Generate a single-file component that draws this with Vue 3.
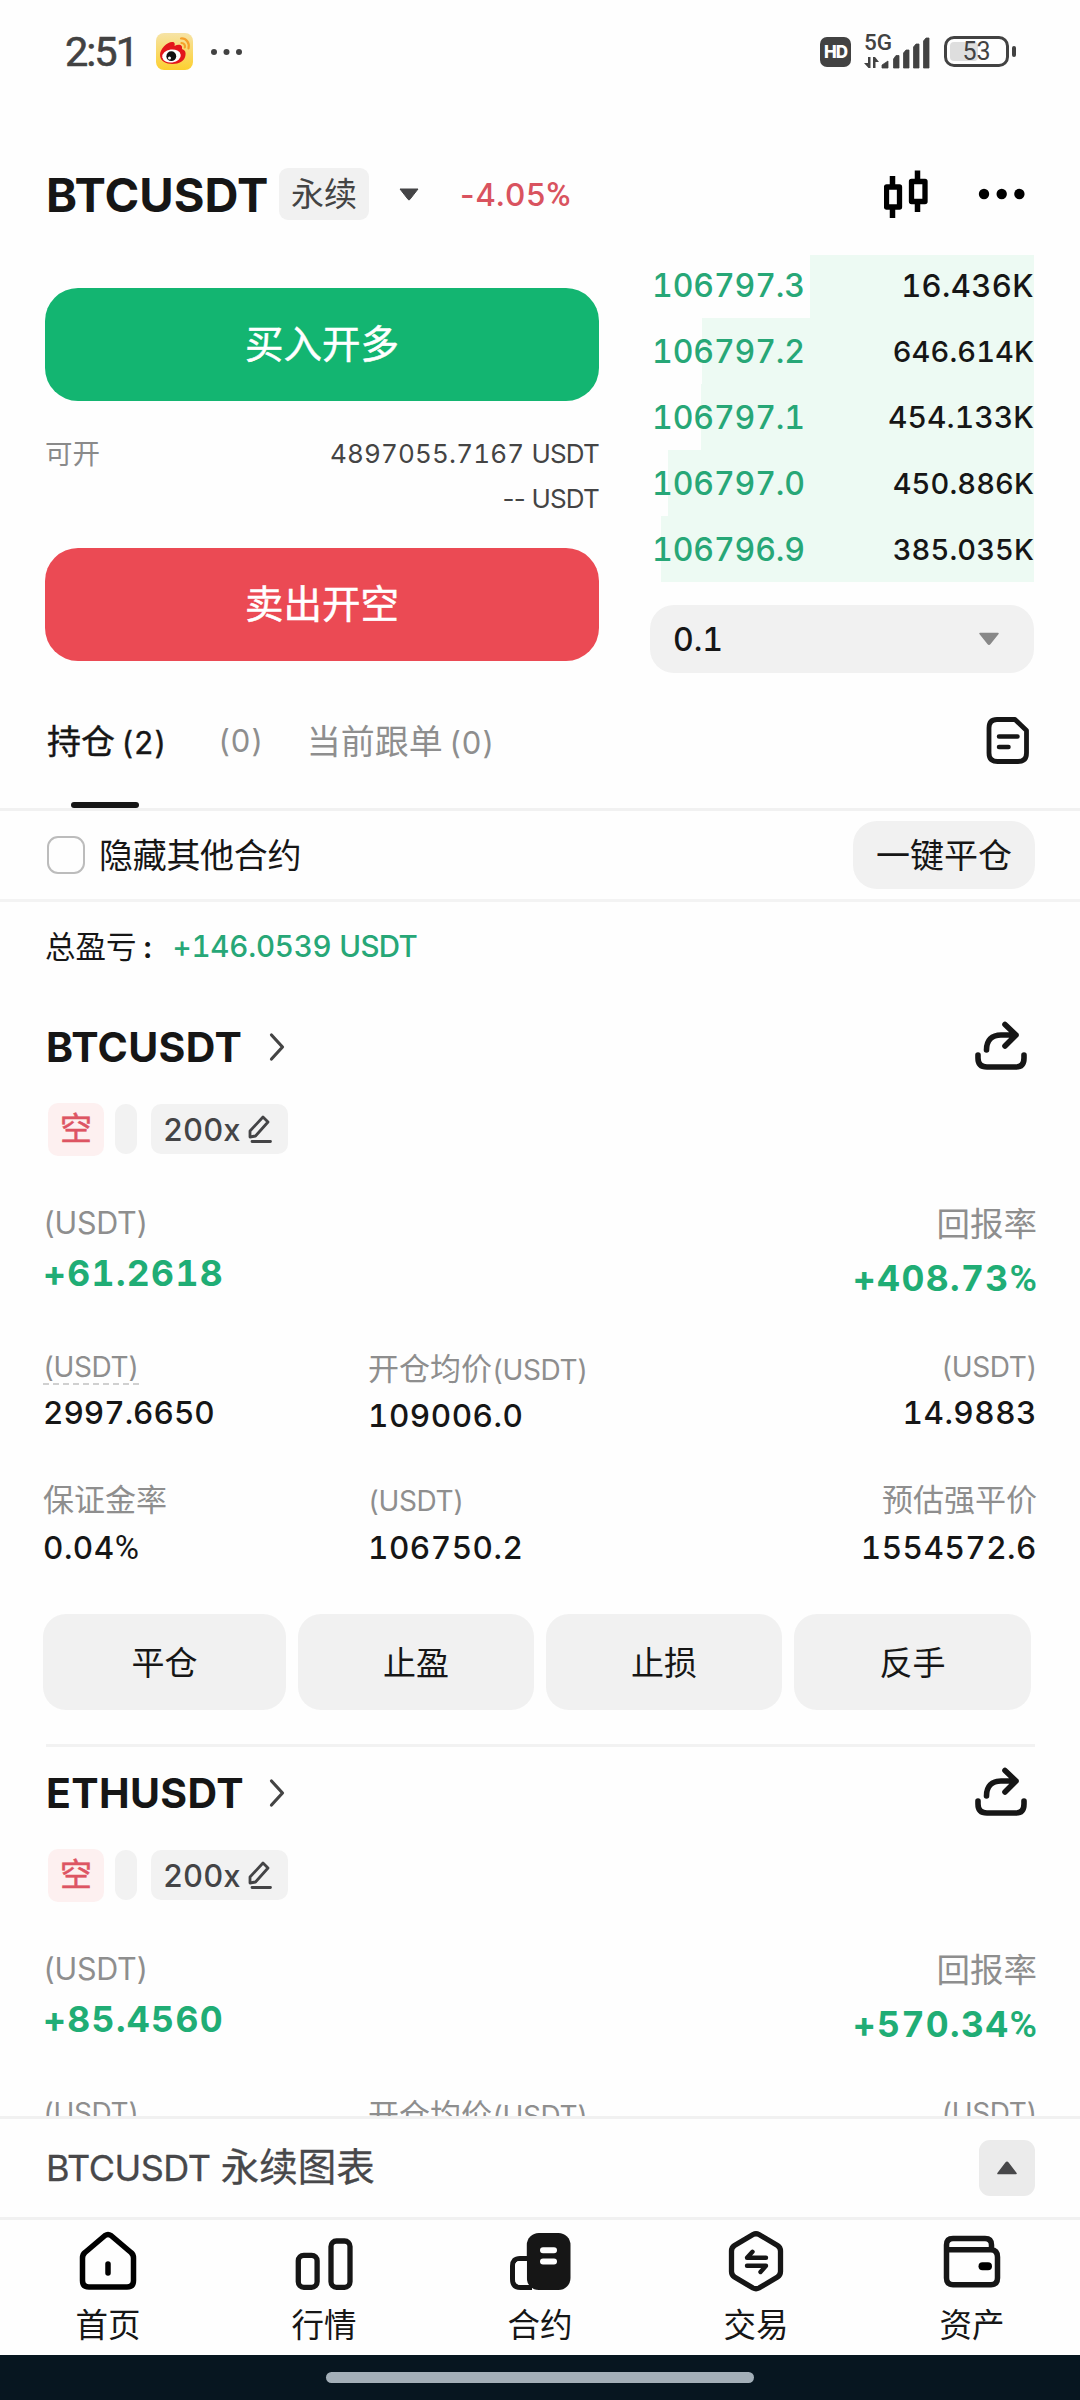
<script setup>
const bids = [
  { price: '106797.3', amount: '16.436K', width: 224, fit: 'wide' },
  { price: '106797.2', amount: '646.614K', width: 332 },
  { price: '106797.1', amount: '454.133K', width: 333, fit: 'mid' },
  { price: '106797.0', amount: '450.886K', width: 366 },
  { price: '106796.9', amount: '385.035K', width: 373 },
]
const positions = [
  {
    symbol: 'BTCUSDT', pnl: '+61.2618', roi: '+408.73',
    detail: {
      size: '2997.6650', entry: '109006.0', margin: '14.9883',
      ratio: '0.04', mark: '106750.2', liq: '1554572.6',
    },
  },
  { symbol: 'ETHUSDT', pnl: '+85.4560', roi: '+570.34' },
]
const actions = ['平仓', '止盈', '止损', '反手']
</script>

<template>
  <div class="screen">
    <header class="status">
      <span class="clock">2:51</span>
      <svg class="weibo" width="37" height="37" viewBox="0 0 37 37">
        <defs>
          <linearGradient id="wb" x1="0" y1="0" x2="0" y2="1">
            <stop offset="0" stop-color="#f6e3a6" />
            <stop offset="1" stop-color="#fdd02f" />
          </linearGradient>
        </defs>
        <rect width="37" height="37" rx="8" fill="url(#wb)" />
        <path d="M4 22C4 16 11 9 16 9C19 9 19 11 18.500 13C22 11 27 11 26 16C29 17 30 19 29.500 22C29 28 23 31 16.500 31C10 31 4 28 4 22Z" fill="#e3161b" />
        <ellipse cx="15.500" cy="23" rx="9.300" ry="6.500" fill="#fff" transform="rotate(-8 15.500 23)" />
        <circle cx="15.300" cy="23.200" r="4.900" fill="#111" />
        <circle cx="13.500" cy="25" r="1.500" fill="#fff" />
        <path d="M25 5.500C30 5 34 10 32.500 15.500M25.500 10C28 10 29.500 12 28.800 14.500" fill="none" stroke="#f6a02a" stroke-width="2.200" stroke-linecap="round" />
      </svg>
      <svg class="more" width="32" height="8" viewBox="0 0 32 8">
        <g fill="#424242"><circle cx="4" cy="4" r="3" /><circle cx="16.500" cy="4" r="3" /><circle cx="29" cy="4" r="3" /></g>
      </svg>
      <div class="sys">
        <span class="hd">HD</span>
        <div class="net">
          <span class="gen">5G</span>
          <svg width="66" height="34" viewBox="0 0 66 34">
            <g fill="#424242">
              <path d="M18 33V30L24 26V33ZM29.500 33V24L32 20.500H35V33ZM39.500 33V18L42 15H45V33ZM49.500 33V12L52 9H55V33ZM59.500 33V6L62 3H65V33Z" stroke="#424242" stroke-width=".8" stroke-linejoin="round" />
              <path d="M4 22H6.500V33H4.500L0 28H4ZM9 33V22H11L15 27H11.500V33Z" />
            </g>
          </svg>
        </div>
        <div class="battery"><span class="fill"></span><span class="pct">53</span><i></i></div>
      </div>
    </header>

    <section class="head">
      <span class="symbol">BTCUSDT</span>
      <span class="kind">永续</span>
      <svg class="caret" width="20" height="13" viewBox="0 0 20 13"><path d="M1 1H19L10.800 11.500Q10 12.500 9.200 11.500Z" fill="#444446" stroke="#444446" stroke-linejoin="round" /></svg>
      <span class="change">-4.05<i class="pc">%</i></span>
      <svg class="candles" width="44" height="49" viewBox="0 0 44 49">
        <path d="M8.500 6V15M8.500 39V48M33.500 .5V10M33.500 33V42" stroke="#000" stroke-width="5.500" />
        <path d="M2.500 17H15.500V37H2.500ZM27.500 11.500H41V31.500H27.500Z" fill="none" stroke="#000" stroke-width="5.300" stroke-linejoin="round" />
      </svg>
      <svg class="dots" width="48" height="12" viewBox="0 0 48 12"><circle cx="6" cy="6" r="5.200" /><circle cx="23.700" cy="6" r="5.200" /><circle cx="41.400" cy="6" r="5.200" /></svg>
    </section>

    <section class="trade">
      <div class="order">
        <button class="buy">买入开多</button>
        <div class="avail">
          <span class="lab">可开</span>
          <div class="vals"><p>4897055.7167 <em>USDT</em></p><p><em>-- USDT</em></p></div>
        </div>
        <button class="sell">卖出开空</button>
      </div>
      <div class="book">
        <div v-for="(b, i) in bids" :key="b.price" class="bid" :class="{ first: i === 0 }">
          <i class="depth" :style="{ width: b.width + 'px' }"></i>
          <span class="price">{{ b.price }}</span><span class="amt" :class="b.fit">{{ b.amount }}</span>
        </div>
        <div class="step">
          <span>0.1</span>
          <svg width="22" height="14" viewBox="0 0 22 14"><path d="M2 1.500H20L12 11.500Q11 12.800 10 11.500Z" fill="#888" stroke="#888" stroke-width="1.500" stroke-linejoin="round" /></svg>
        </div>
      </div>
    </section>

    <nav class="tabs">
      <span class="tab on">持仓 <em>(2)</em></span>
      <span class="tab t2"><em>(0)</em></span>
      <span class="tab t3">当前跟单 <em>(0)</em></span>
      <svg class="doc" width="44" height="50" viewBox="0 0 44 50">
        <path d="M11 3.500H29L40.500 14.500V37Q40.500 45.500 32 45.500H11.500Q3 45.500 3 37V12Q3 3.500 11 3.500Z" fill="none" stroke="#161616" stroke-width="4.800" stroke-linejoin="round" />
        <path d="M13 20.500H31.500M13 31H22.500" stroke="#161616" stroke-width="4.500" stroke-linecap="round" />
      </svg>
    </nav>

    <section class="filter">
      <i class="check"></i><span class="hide">隐藏其他合约</span>
      <button class="close-all">一键平仓</button>
    </section>

    <div class="list">
      <div class="total"><span class="cn">总盈亏</span><span class="colon">:</span><b>+146.0539 <em>USDT</em></b></div>
      <article v-for="p in positions" :key="p.symbol" class="pos">
        <div class="title">
          <h2>{{ p.symbol }}</h2>
          <svg class="chev" width="16" height="30" viewBox="0 0 16 30"><path d="M2.500 3L13.500 15L2.500 27" fill="none" stroke="#444" stroke-width="3.200" stroke-linecap="round" stroke-linejoin="round" /></svg>
          <svg class="share" width="54" height="52" viewBox="0 0 54 52">
            <path d="M4 35V38Q4 47 13 47H42Q50 47 50 38V35M12.500 30C12.500 20 18 15 27 15H42M31 4.500L42 15L31 26" fill="none" stroke="#161616" stroke-width="5.600" stroke-linecap="round" stroke-linejoin="round" />
          </svg>
        </div>
        <div class="tags">
          <span class="side">空</span><span class="mode"></span>
          <span class="lev">200x
            <svg width="24" height="30" viewBox="0 0 24 30"><path d="M2 23V17L15 3L20 8L7.500 22ZM4 27.500H22.500" fill="none" stroke="#444446" stroke-width="2.800" stroke-linejoin="round" stroke-linecap="round" /></svg>
          </span>
        </div>
        <div class="summary">
          <div><p class="k">(USDT)</p><p class="v">{{ p.pnl }}</p></div>
          <div class="r"><p class="k cn">回报率</p><p class="v">{{ p.roi }}<i class="pc">%</i></p></div>
        </div>
        <div class="grid">
          <div><p class="k"><span class="under">(USDT)</span></p><p v-if="p.detail" class="v size">{{ p.detail.size }}</p></div>
          <div class="low"><p class="k"><span class="cn">开仓均价</span>(USDT)</p><p v-if="p.detail" class="v">{{ p.detail.entry }}</p></div>
          <div class="r"><p class="k">(USDT)</p><p v-if="p.detail" class="v">{{ p.detail.margin }}</p></div>
        </div>
        <template v-if="p.detail">
          <div class="grid second">
            <div><p class="k cn">保证金率</p><p class="v">{{ p.detail.ratio }}<i class="pc">%</i></p></div>
            <div><p class="k">(USDT)</p><p class="v">{{ p.detail.mark }}</p></div>
            <div class="r"><p class="k cn">预估强平价</p><p class="v">{{ p.detail.liq }}</p></div>
          </div>
          <div class="acts"><button v-for="a in actions" :key="a">{{ a }}</button></div>
        </template>
      </article>
    </div>

    <section class="chart">
      <span class="nm">BTCUSDT <em>永续图表</em></span>
      <span class="up"><svg width="22" height="14" viewBox="0 0 22 14"><path d="M2 12.500H20L12 2Q11 .8 10 2Z" fill="#48484a" stroke="#48484a" stroke-width="1.600" stroke-linejoin="round" /></svg></span>
    </section>

    <footer class="nav">
      <div class="item">
        <svg width="64" height="64" viewBox="0 0 64 64"><path d="M6.500 29Q6.500 25.500 9 23.500L29 6.500Q32 4.500 35 6.500L55 23.500Q57.500 25.500 57.500 29V51.500Q57.500 58 51 58H13Q6.500 58 6.500 51.500Z" fill="none" stroke="#000" stroke-width="5.500" stroke-linejoin="round" /><path d="M32 35V44" stroke="#000" stroke-width="5.500" stroke-linecap="round" /></svg>
        <span>首页</span>
      </div>
      <div class="item">
        <svg width="64" height="64" viewBox="0 0 64 64"><g fill="none" stroke="#161616" stroke-width="5.300"><rect x="6.300" y="26.300" width="18.800" height="32" rx="5.500" /><rect x="39" y="12" width="19" height="46.300" rx="5.500" /></g></svg>
        <span>行情</span>
      </div>
      <div class="item">
        <svg width="64" height="64" viewBox="0 0 64 64"><rect x="18.800" y="4" width="43.700" height="57" rx="12" fill="#161616" /><path d="M20 29.500H12Q4.600 29.500 4.600 37V50Q4.600 58.500 12.500 58.500H24" fill="none" stroke="#161616" stroke-width="5.200" /><path d="M7 37Q7 32 12 32H18.800V50Q18.800 56 13 56Q7 56 7 50Z" fill="#fff" /><path d="M35 21.300H46M35 32.500H46" stroke="#fff" stroke-width="6" stroke-linecap="round" /></svg>
        <span>合约</span>
      </div>
      <div class="item">
        <svg width="64" height="64" viewBox="0 0 64 64"><path d="M29 5.500Q32 4 35 5.500L53.500 16.500Q56.500 18.500 56.500 22V42.500Q56.500 46 53.500 48L35 59Q32 60.500 29 59L10.500 48Q7.500 46 7.500 42.500V22Q7.500 18.500 10.500 16.500Z" fill="none" stroke="#161616" stroke-width="5.300" /><path d="M42 28.800H23L28.500 22.800M23 36.800H42L36.500 43" fill="none" stroke="#161616" stroke-width="4.400" stroke-linecap="round" stroke-linejoin="round" /></svg>
        <span>交易</span>
      </div>
      <div class="item">
        <svg width="64" height="64" viewBox="0 0 64 64"><path d="M6.500 21V16Q6.500 9.500 13 9.500H45Q51.500 9.500 51.500 16V21M6.500 20.700H51Q57.500 21 57.500 28V49Q57.500 55.700 51 55.700H13Q6.500 55.700 6.500 49Z" fill="none" stroke="#161616" stroke-width="5.500" stroke-linejoin="round" /><path d="M42.500 37.300H48" stroke="#000" stroke-width="8" stroke-linecap="round" /></svg>
        <span>资产</span>
      </div>
    </footer>
    <div class="gesture"><i></i></div>
  </div>
</template>

<style>
body { margin: 0; background: #fefefe; }
</style>

<style scoped>
.screen { width: 1080px; height: 2400px; display: flex; flex-direction: column; overflow: hidden; background: #fefefe; color: #161616; font-family: Inter, "Noto Sans CJK SC", sans-serif; font-variant-numeric: tabular-nums; white-space: nowrap; }
p, h2 { margin: 0; }
em { font-style: normal; }
button { font: inherit; color: inherit; border: 0; padding: 0; }
svg { display: block; flex: none; }
.pc { font-family: Roboto, sans-serif; font-size: 1.050em; font-style: normal; font-variant-numeric: proportional-nums; letter-spacing: 0; }

.status { height: 103px; flex: none; display: flex; align-items: center; padding: 0 65px 0 65px; margin-bottom: 33px; color: #424242; }
.clock { width: 91px; font: 400 41.500px/44px Roboto, sans-serif; letter-spacing: -2px; -webkit-text-stroke: 0.600px #424242; }
.more { margin-left: 17px; }
.sys { margin-left: auto; margin-right: -1px; display: flex; align-items: center; }
.hd { width: 31px; height: 30px; border-radius: 7px; background: #424242; color: #fff; font: 800 17px/30px Inter, sans-serif; text-align: center; letter-spacing: -1px; }
.net { position: relative; width: 66px; height: 34px; margin-left: 13px; }
.gen { position: absolute; left: 0; top: -4px; font: 500 22.500px/22px Roboto, sans-serif; }
.battery { position: relative; box-sizing: border-box; width: 65px; height: 31px; margin: 0 7px 0 14px; border: 3px solid #424242; border-radius: 10px; display: flex; align-items: center; justify-content: center; }
.fill { position: absolute; left: 3px; top: 3px; bottom: 3px; width: 28px; border-radius: 4px; background: #dedede; }
.pct { position: relative; font: 400 25px/25px Roboto, sans-serif; }
.battery i { position: absolute; right: -10px; top: 7px; width: 4px; height: 11px; border-radius: 2px; background: #424242; }

.head { height: 116px; flex: none; display: flex; align-items: center; padding: 0 56px 0 46px; }
.symbol { width: 233px; font-size: 47px; font-weight: 700; letter-spacing: 0.050px; }
.kind { width: 90px; height: 52px; border-radius: 9px; background: #f1f1f1; color: #444; font-size: 33px; line-height: 52px; text-align: center; }
.caret { margin-left: 30px; }
.change { margin-left: 41px; color: #d9535f; font-size: 31.500px; font-weight: 500; font-variant-numeric: proportional-nums; letter-spacing: 0.700px; }
.candles { margin-left: auto; }
.dots { margin-left: 50px; margin-right: -2px; }

.trade { height: 421px; flex: none; display: flex; justify-content: space-between; padding: 0 46px 0 45px; }
.order { width: 554px; padding-top: 36px; }
.buy, .sell { display: block; width: 554px; height: 113px; border-radius: 33px; color: #fff; font-size: 38.500px; line-height: 113px; -webkit-text-stroke: 0.500px #fff; }
.buy { background: #13b571; }
.sell { background: #eb4a54; }
.avail { display: flex; justify-content: space-between; margin: 30px 0 27px; line-height: 45px; }
.lab { color: #8a8a8a; font-size: 27.500px; padding-top: 1px; }
.vals { color: #444; font-size: 26px; text-align: right; letter-spacing: 0.150px; }
.vals em { letter-spacing: -0.800px; font-variant-numeric: proportional-nums; }
.book { width: 384px; }
.bid { position: relative; height: 66px; display: flex; justify-content: space-between; align-items: center; padding-left: 2px; }
.depth { position: absolute; right: 0; top: 0; bottom: 0; background: #edfaf3; }
.first .depth { top: 3px; }
.price { position: relative; color: #27a777; font-size: 32px; font-weight: 500; letter-spacing: -0.100px; }
.amt { position: relative; font-size: 29px; font-weight: 450; letter-spacing: 0.100px; }
.wide { font-size: 31px; letter-spacing: 0.400px; }
.mid { font-size: 30px; }
.step { box-sizing: border-box; height: 68px; margin-top: 23px; padding: 0 34px 0 23px; border-radius: 24px; background: #f1f1f1; display: flex; align-items: center; justify-content: space-between; font-size: 32px; font-weight: 450; }

.tabs { position: relative; height: 135px; flex: none; display: flex; align-items: center; padding: 0 50px 0 47px; border-bottom: 3px solid #f1f1f1; font-size: 34px; color: #8e8e8e; word-spacing: -3px; }
.tab { padding-bottom: 3px; }
.tab em { font-size: 31px; letter-spacing: 0.500px; }
.on { color: #161616; -webkit-text-stroke: 0.400px #161616; }
.on::after { content: ""; position: absolute; left: 71px; bottom: 0; width: 68px; height: 6.500px; border-radius: 3px; background: #161616; }
.t2 { margin-left: 51px; }
.t3 { margin-left: 43px; }
.doc { margin-left: auto; }

.filter { height: 88px; flex: none; display: flex; align-items: center; padding: 0 45px 0 47px; border-bottom: 3px solid #f3f3f3; font-size: 34px; }
.check { box-sizing: border-box; width: 38px; height: 38px; border: 2.500px solid #bcbcbc; border-radius: 11px; }
.hide { margin-left: 14px; letter-spacing: -0.300px; padding-bottom: 3px; }
.close-all { box-sizing: border-box; margin-left: auto; width: 182px; height: 68px; padding-bottom: 3px; border-radius: 24px; background: #f1f1f1; }

.list { height: 1214px; flex: none; overflow: hidden; }
.total { height: 88px; display: flex; align-items: center; padding-left: 45px; font-size: 30.500px; }
.total .cn { padding-bottom: 3px; }
.colon { box-sizing: border-box; width: 36px; padding-left: 7px; font-weight: 600; }
.total b { font-weight: 500; font-size: 29.500px; color: #27a777; letter-spacing: -0.200px; }
.total em { letter-spacing: -0.700px; }
.pos { height: 737px; padding: 0 43px; }
.total + .pos { padding-top: 20px; height: 734px; }
.pos + .pos { position: relative; padding-top: 12px; }
.pos + .pos::before { content: ""; position: absolute; left: 46px; right: 45px; top: 0; height: 3px; background: #f2f2f2; }
.title { height: 74px; display: flex; align-items: center; }
.title h2 { width: 223px; padding-left: 3px; font-size: 41px; font-weight: 700; letter-spacing: 0.350px; }
.share { margin-left: auto; margin-right: 9px; position: relative; top: -1px; }
.tags { height: 52px; margin-top: 19px; display: flex; align-items: center; padding-left: 5px; }
.side { width: 56px; height: 53px; border-radius: 10px; background: #fdf0f0; color: #dd5563; font-size: 32px; line-height: 51px; text-align: center; -webkit-text-stroke: 0.500px #dd5563; }
.mode { width: 22px; height: 50px; margin-left: 11px; border-radius: 11px; background: #f2f2f2; }
.lev { box-sizing: border-box; width: 137px; height: 50px; margin-left: 14px; padding-left: 12px; border-radius: 10px; background: #f2f2f2; color: #444446; font-size: 31px; display: flex; align-items: center; font-weight: 450; }
.lev svg { margin-left: 7px; }
.summary { display: flex; justify-content: space-between; margin-top: 41px; }
.summary .k { height: 52px; line-height: 53px; font-size: 30.500px; letter-spacing: -0.300px; }
.summary .cn { font-size: 33.500px; line-height: 49px; letter-spacing: 0; }
.summary .v { height: 52px; line-height: 52px; font-size: 35.500px; font-weight: 700; color: #20ad75; letter-spacing: 1.350px; }
.summary .pc { font-weight: 600; letter-spacing: 0; }
.summary .r { padding-top: 4px; }
.k { color: #8e8e8e; }
.r { text-align: right; }
.grid { display: grid; grid-template-columns: 325px 300px 1fr; height: 134px; margin-top: 39px; }
.grid .k { height: 47px; line-height: 48px; font-size: 28px; letter-spacing: -0.400px; }
.grid .cn { font-size: 31px; letter-spacing: 0; line-height: 46px; }
.grid .v { height: 45px; line-height: 45px; font-size: 31.500px; font-weight: 450; letter-spacing: 0.500px; }
.grid .size { letter-spacing: 0; }
.grid .low { padding-top: 3px; }
.under { display: inline-block; height: 40px; border-bottom: 2px dashed #d0d0d0; }
.grid.second { margin-top: 0; height: 137px; }
.second .v { line-height: 47px; }
.acts { display: grid; grid-template-columns: 243px 236px 236px 237px; gap: 12px; }
.acts button { box-sizing: border-box; height: 96px; padding-bottom: 2px; border-radius: 23px; background: #f1f1f1; font-size: 33px; }

.chart { box-sizing: border-box; height: 101px; flex: none; display: flex; align-items: center; justify-content: space-between; padding: 0 45px 0 46px; border-top: 3px solid #f1f1f1; color: #48484a; }
.nm { font-size: 36px; letter-spacing: -0.500px; padding-bottom: 2px; line-height: 60px; -webkit-text-stroke: 0.300px #48484a; }
.nm em { font-size: 38.500px; letter-spacing: 0; margin-left: 1px; }
.up { width: 56px; height: 56px; border-radius: 11px; background: #ebebeb; display: flex; align-items: center; justify-content: center; }
.nav { box-sizing: border-box; height: 138px; flex: none; display: flex; border-top: 3px solid #f1f1f1; }
.item { width: 216px; display: flex; flex-direction: column; align-items: center; padding-top: 9px; }
.item span { margin-top: 11px; font-size: 32.500px; line-height: 44px; }
.gesture { flex: 1; background: #071620; display: flex; justify-content: center; }
.gesture i { width: 428px; height: 11px; margin-top: 17px; border-radius: 5.500px; background: #a3afb8; }
</style>
